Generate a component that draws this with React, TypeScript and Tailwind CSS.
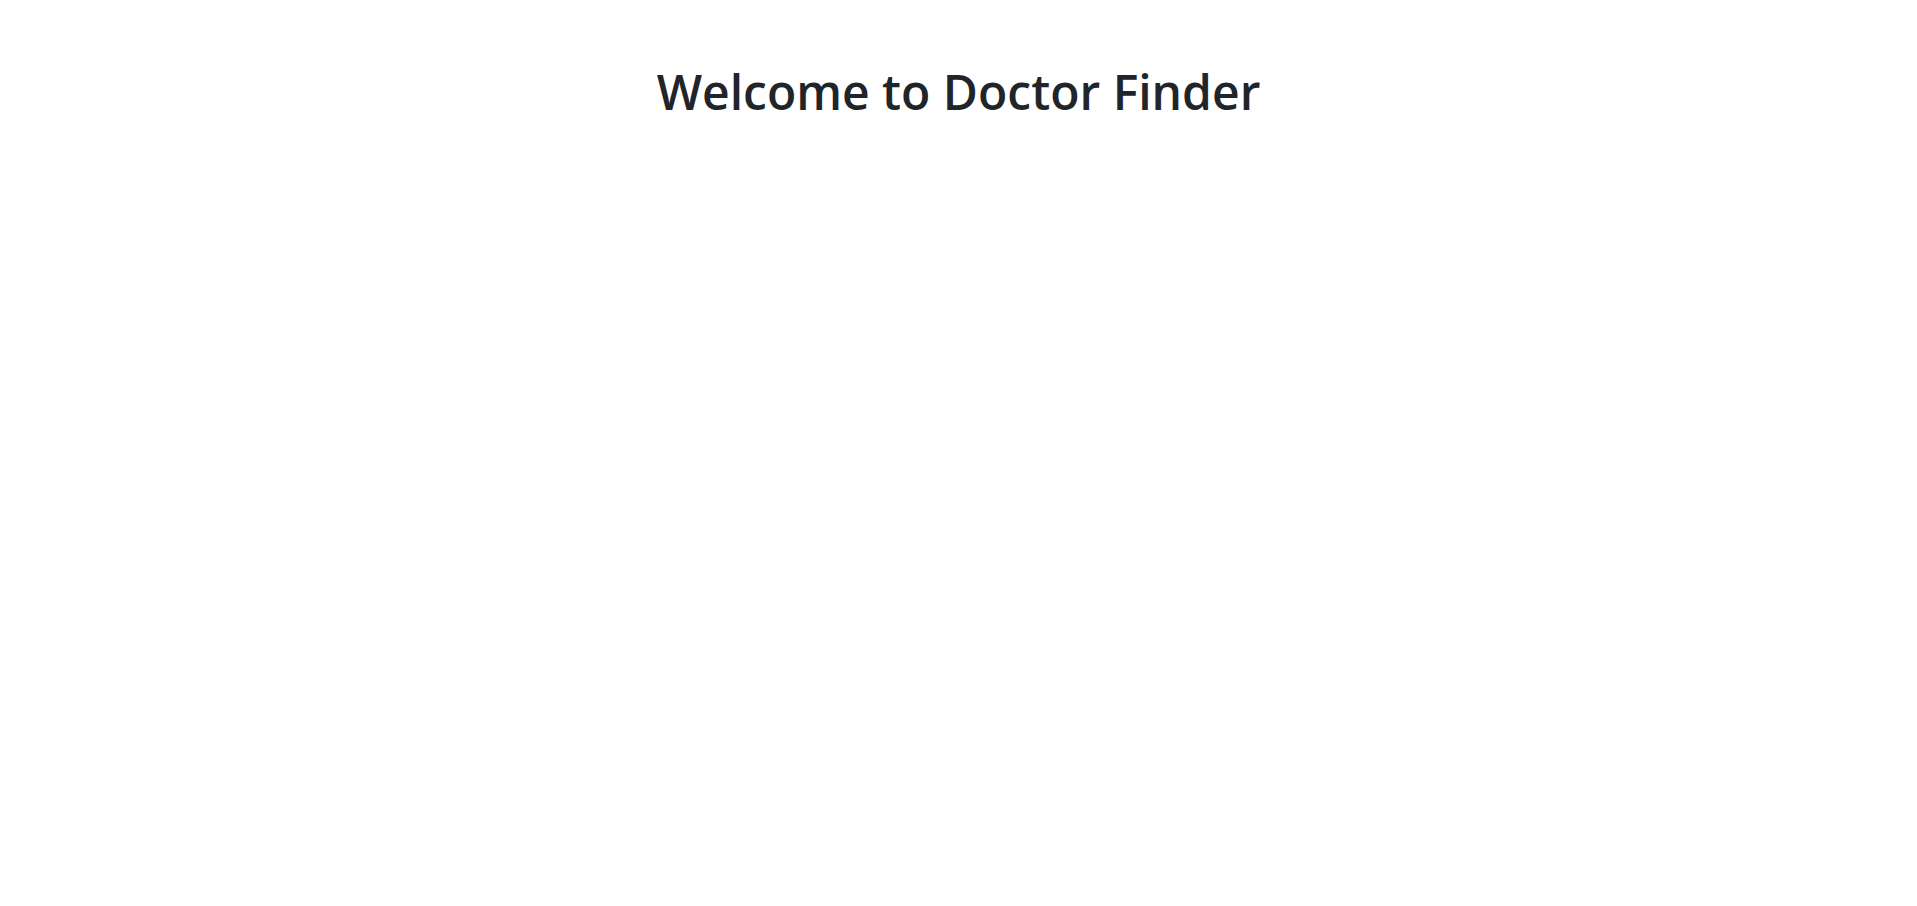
export default function App() {
  return (
    <div className="min-h-screen bg-white">
      <div className="pt-[63px] text-center">
        <h1 className="text-[48px] font-semibold leading-[1.2] text-[#212529] [font-family:'Open_Sans',sans-serif]">
          Welcome to Doctor Finder
        </h1>
      </div>
    </div>
  );
}
